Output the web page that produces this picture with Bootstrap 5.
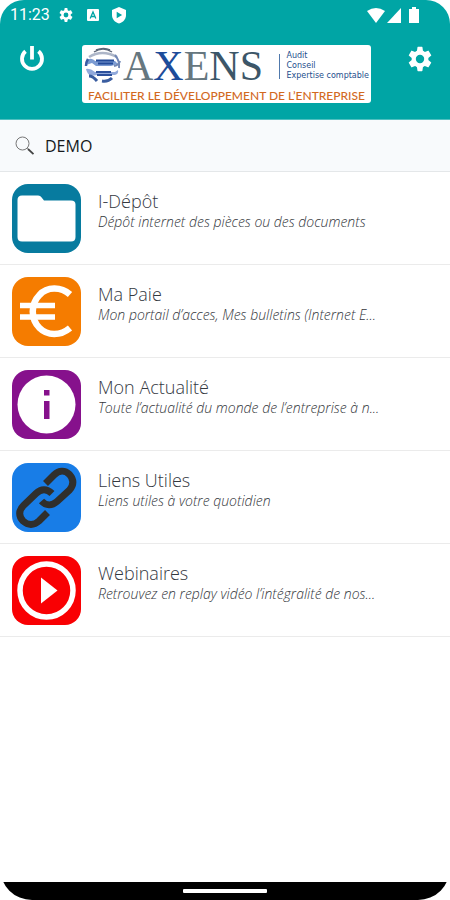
<!DOCTYPE html>
<html lang="fr">
<head>
<meta charset="utf-8">
<meta name="viewport" content="width=device-width, initial-scale=1">
<title>Axens</title>
<link rel="stylesheet" href="https://cdn.jsdelivr.net/npm/bootstrap@5.3.0/dist/css/bootstrap.min.css">
<style>
body { font-family: "Open Sans", "Noto Sans", sans-serif; background: #fff; }
.screen { border-radius: 24px 24px 32px 32px; overflow: hidden; }
.top-zone { background: #00a5a5; color: #fff; border-bottom: 1px solid #4fc0c0; }
.status-bar { font: 400 16px/20px Roboto, sans-serif; padding: 5px 31px 5px 10px; }
.status-left { gap: 13px; }
.status-left time { margin-right: -5px; }
.status-right { gap: 2px; }
.status-right .battery { margin-left: 6px; }
.title-bar { padding: 15px 16px 16px 17px; gap: 35px; }
.icon-btn { line-height: 0; color: #fff; }
.brand { background: #fff; border-radius: 3px; height: 58px; padding: 0 2px; min-width: 0; }
.brand-top { height: 42px; gap: 1px; }
.brand-name { font: 42px/40px "Liberation Serif", serif; color: #66777f; }
.brand-name b { font-weight: 400; color: #1d4c9a; }
.brand-name i { font-style: normal; color: #3c5668; }
.brand-lines { font: 8px/10px "DejaVu Sans", sans-serif; color: #254f8d; padding-left: 6px; white-space: nowrap; }
.brand-rule { width: 1px; height: 25px; background: #5079ac; }
.brand-tag { font: 500 12px/18px Lato, sans-serif; color: #d2691e; white-space: nowrap; text-align: center; }
.search-row { background: #f8fafc; border-bottom: 1px solid #e4e7e9; height: 52px; padding: 0 15px; gap: 10px; }
.search-row input { font-size: 16px; line-height: 24px; font-weight: 500; color: #16191c; min-width: 0; outline-offset: 4px; }
.menu .list-group-item { padding: 12px; gap: 17px; border-color: #ebebeb; border-width: 0 0 1px; color: #34383f; height: 93px; }
.menu .list-group-item:last-child { border-bottom-width: 1px; }
.menu svg { flex: none; }
.entry { padding-top: 6px; max-width: 300px; min-width: 0; }
.entry h2 { font-size: 18px; line-height: 22px; font-weight: 300; margin: 0; }
.entry p { font-size: 14px; line-height: 20px; font-weight: 300; font-style: italic; margin: 0; color: #33363b; }
.nav-strip { background: #000; height: 18px; }
.nav-strip span { width: 84px; height: 4px; border-radius: 1px; background: #fff; }
</style>
<script src="https://cdn.jsdelivr.net/npm/bootstrap@5.3.0/dist/js/bootstrap.bundle.min.js"></script>
</head>
<body>
<svg width="0" height="0" class="position-absolute" aria-hidden="true">
  <symbol id="gear" viewBox="0 0 24 24"><path fill="currentColor" fill-rule="evenodd" d="M19.14 12.94a7 7 0 0 0 0-1.88l2.3-1.8a.5.5 0 0 0 .12-.7l-2.1-3.5a.5.5 0 0 0-.6-.23l-2.7 1.08a8 8 0 0 0-1.62-.94l-.4-2.87A.5.5 0 0 0 13.6 1.6h-3.3a.5.5 0 0 0-.5.5l-.4 2.87a8 8 0 0 0-1.62.94l-2.7-1.08a.5.5 0 0 0-.6.23l-2 3.5a.5.5 0 0 0 .12.7l2.3 1.8a7 7 0 0 0 0 1.88l-2.3 1.8a.5.5 0 0 0-.12.7l2 3.5c.14.22.38.3.6.23l2.7-1.08c.5.38 1.04.7 1.62.94l.4 2.87c.04.3.25.5.5.5h3.3a.5.5 0 0 0 .5-.5l.4-2.87a8 8 0 0 0 1.62-.94l2.7 1.08c.22.08.46 0 .6-.23l2.1-3.5a.5.5 0 0 0-.12-.7ZM12 15.600a3.600 3.600 0 1 1 0-7.200 3.600 3.600 0 0 1 0 7.200Z"/></symbol>
</svg>
<div class="screen min-vh-100 d-flex flex-column">
  <header class="top-zone">
    <div class="status-bar d-flex justify-content-between align-items-center">
      <div class="status-left d-flex align-items-center">
        <time>11:23</time>
        <svg width="16" height="16"><use href="#gear"/></svg>
        <svg width="12" height="14" viewBox="0 0 12 14"><rect y="1" width="12" height="12" rx="1" fill="#fff"/><path d="M3.2 10.5 6 4l2.8 6.5M4.3 8.5h3.4" fill="none" stroke="#00a5a5" stroke-width="1.3"/></svg>
        <svg width="14" height="17" viewBox="0 0 14 17"><path d="M7 0 14 3v5c0 4-3 7.500-7 8.500C3 15.500 0 12 0 8V3Z" fill="#fff"/><path d="m4.700 4.700 5.400 3.300-5.400 3.300Z" fill="#00a5a5"/></svg>
      </div>
      <div class="status-right d-flex align-items-center">
        <svg width="18" height="15" viewBox="0 0 18 15"><path d="M0 3Q9-3 18 3L9 15Z" fill="#fff"/></svg>
        <svg width="14" height="15" viewBox="0 0 14 15"><path d="M14 0v15H0Z" fill="#fff"/></svg>
        <svg class="battery" width="10" height="16" viewBox="0 0 10 16"><path d="M3 0h4v2h3v14H0V2h3Z" fill="#fff"/></svg>
      </div>
    </div>
    <div class="title-bar d-flex justify-content-between">
      <button type="button" class="icon-btn btn p-0 border-0 align-self-start" aria-label="Déconnexion">
        <svg width="30" height="30" viewBox="0 0 30 30" fill="none" stroke="currentColor" stroke-width="3.800"><path d="M8.500 6.200a10 10 0 1 0 13 0M15 1v13.500"/></svg>
      </button>
      <div class="brand flex-grow-1">
        <div class="brand-top d-flex align-items-center">
          <svg width="38" height="38" viewBox="0 0 38 38" fill="none">
            <path d="M10 5Q19-1 28 5M12 3Q20 0 26 3" stroke="#5c6678" stroke-width="1.500"/>
            <path d="M5 10Q18 2 33 10" stroke="#adb6c8" stroke-width="2.500"/>
            <path d="M2 15c3-5 7-3 9-1h20l3 3-7 2H12l-4-3-6 2Z" fill="#7b9bd2"/>
            <path d="M12 13.500h18M14 16.500h15" stroke="#234a98" stroke-width="2"/>
            <path d="M2 22q4-1 9 3h20l3-2q1 4-3 5H13l-6 1q-4-2-5-7Z" fill="#91a9db"/>
            <path d="M12 25h15M13 28h15" stroke="#2c509c" stroke-width="2"/>
            <path d="M31 8q5 6 4 13M30 19q5-1 6-5" stroke="#7187b4" stroke-width="2"/>
            <path d="M4 12q-2 3-2 7" stroke="#3a5da4" stroke-width="2.500"/>
            <path d="M5 29q4 0 8 5m5 0q6 1 10-3" stroke="#3a5da0" stroke-width="3"/>
          </svg>
          <span class="brand-name">A<b>X</b>E<i>NS</i></span>
          <span class="brand-rule ms-auto"></span>
          <span class="brand-lines">Audit<br>Conseil<br>Expertise comptable</span>
        </div>
        <div class="brand-tag">FACILITER LE DÉVELOPPEMENT DE L’ENTREPRISE</div>
      </div>
      <button type="button" class="icon-btn btn p-0 border-0 align-self-start" aria-label="Paramètres">
        <svg width="28" height="28"><use href="#gear"/></svg>
      </button>
    </div>
  </header>
  <main class="flex-grow-1">
    <div class="search-row d-flex align-items-center">
      <label for="search" class="d-flex" aria-label="Rechercher">
        <svg width="20" height="20" viewBox="0 0 20 20" fill="none" stroke="#777"><circle cx="7.500" cy="7.500" r="6.500"/><path d="m12.300 12.300 2 2"/><path d="m13 13 5.500 5.200" stroke="#444" stroke-width="1.800"/></svg>
      </label>
      <input id="search" type="text" value="DEMO" class="flex-grow-1 border-0 bg-transparent p-0">
    </div>
    <nav class="menu list-group list-group-flush">
      <a href="#depot" class="list-group-item list-group-item-action d-flex">
        <svg width="69" height="69" viewBox="0 0 69 69"><rect width="69" height="69" rx="16" fill="#077b9f"/><path d="M10 11.500h16c2 0 3 1 4 2.500l2 2.500h27c3 0 4.500 1.500 4.500 4V53c0 3-1.500 4.500-4.500 4.500H10c-3 0-4.500-1.500-4.500-4.500V16c0-3 1.500-4.500 4.500-4.500Z" fill="#fff"/></svg>
        <div class="entry"><h2 class="text-truncate">I-Dépôt</h2><p class="text-truncate">Dépôt internet des pièces ou des documents</p></div>
      </a>
      <a href="#paie" class="list-group-item list-group-item-action d-flex">
        <svg width="69" height="69" viewBox="0 0 69 69"><rect width="69" height="69" rx="16" fill="#f57c00"/><path d="M58 17.500C49 9.500 35 9.500 27.500 18c-9 9-9 24 0 33 8 8 21 8 30.500 0" fill="none" stroke="#fff" stroke-width="6.500"/><path d="M8 28.500h35M8 40h35" stroke="#fff" stroke-width="5.500"/></svg>
        <div class="entry"><h2 class="text-truncate">Ma Paie</h2><p class="text-truncate">Mon portail d’acces, Mes bulletins (Internet E...</p></div>
      </a>
      <a href="#actualite" class="list-group-item list-group-item-action d-flex">
        <svg width="69" height="69" viewBox="0 0 69 69"><rect width="69" height="69" rx="16" fill="#86118c"/><circle cx="34.500" cy="34.500" r="29" fill="#fff"/><path d="M32 20h5.500v5.500H32ZM32 31h5.500v18H32Z" fill="#86118c"/></svg>
        <div class="entry"><h2 class="text-truncate">Mon Actualité</h2><p class="text-truncate">Toute l’actualité du monde de l’entreprise à n...</p></div>
      </a>
      <a href="#liens" class="list-group-item list-group-item-action d-flex">
        <svg width="69" height="69" viewBox="0 0 69 69"><rect width="69" height="69" rx="16" fill="#187de7"/><g fill="none" stroke="#302f2c" stroke-width="7"><path d="M33.500 20.500 42 12c5-5 11-5 15.500-.5 4.500 5 4.500 10.500 0 15.500L45 38.500c-5 4.500-11 4.500-15.500-.5"/><path d="M40 30.500c-5-5-11-5-16 0L11.500 42.500c-5 5-5 10.500-.5 15.500 5 4.500 11 4.500 16 0l8.500-8.500"/></g></svg>
        <div class="entry"><h2 class="text-truncate">Liens Utiles</h2><p class="text-truncate">Liens utiles à votre quotidien</p></div>
      </a>
      <a href="#webinaires" class="list-group-item list-group-item-action d-flex">
        <svg width="69" height="69" viewBox="0 0 69 69"><rect width="69" height="69" rx="16" fill="#f90003"/><circle cx="34.500" cy="34.500" r="26.500" fill="none" stroke="#fff" stroke-width="5.500"/><path d="M29 21.500 45.500 34.500 29 47.500Z" fill="#fff"/></svg>
        <div class="entry"><h2 class="text-truncate">Webinaires</h2><p class="text-truncate">Retrouvez en replay vidéo l’intégralité de nos...</p></div>
      </a>
    </nav>
  </main>
  <footer class="nav-strip d-flex align-items-center justify-content-center"><span></span></footer>
</div>
</body>
</html>
